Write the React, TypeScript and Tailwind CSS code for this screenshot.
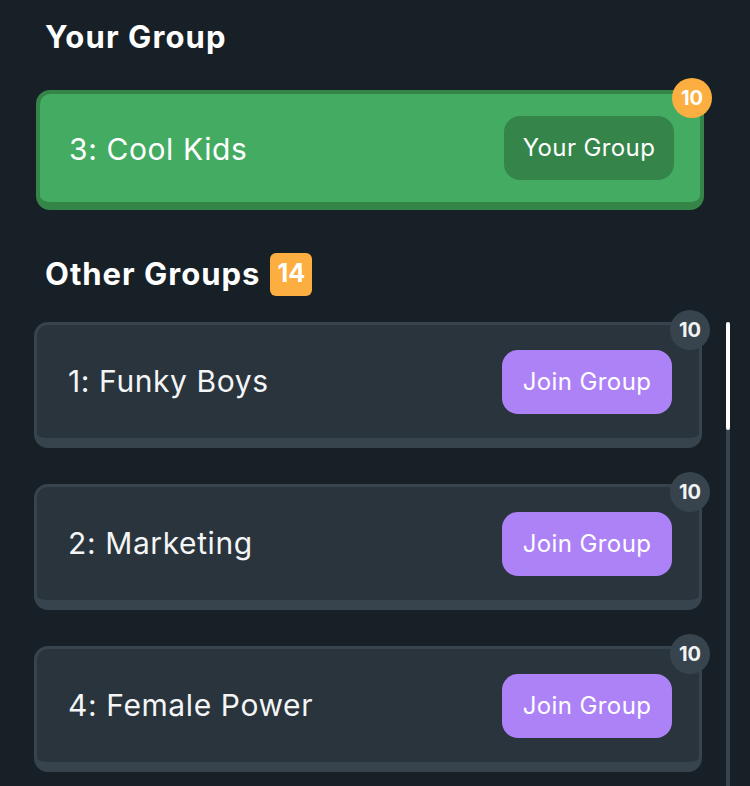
import React from "react";

const font = { fontFamily: "Inter, 'Noto Sans', sans-serif" };

function CountBadge({ n, orange }: { n: number; orange?: boolean }) {
  return (
    <div
      className={
        "absolute flex h-[40px] w-[40px] items-center justify-center rounded-full text-[20px] font-bold " +
        (orange
          ? "-right-[12px] -top-[16px] bg-[#fdae40] text-white"
          : "-right-[11px] -top-[15px] bg-[#37444e] text-[#f1f3f4]")
      }
    >
      {n}
    </div>
  );
}

function GroupCard({ title }: { title: string }) {
  return (
    <div className="relative flex h-[126px] w-[668px] items-center justify-between rounded-[14px] border-[3px] border-b-[10px] border-[#37444e] bg-[#29343d] pl-[31px] pr-[27px]">
      <span className="text-[30px] tracking-[0.6px] text-[#f4f5f6]">{title}</span>
      <button className="flex h-[64px] w-[170px] items-center justify-center rounded-[16px] bg-[#ad82f7] text-[24px] tracking-[0.4px] text-white">
        Join Group
      </button>
      <CountBadge n={10} />
    </div>
  );
}

export default function App() {
  return (
    <div className="flex h-[786px] w-[750px] flex-col overflow-hidden bg-[#172026]" style={font}>
      <h2 className="pl-[45px] pt-[18px] text-[31px] font-bold leading-[38px] tracking-[1.1px] text-white">Your Group</h2>
      <div className="mt-[34px] pl-[36px]">
        <div className="relative flex h-[120px] w-[668px] items-center justify-between rounded-[14px] border-[4px] border-b-[8px] border-[#358549] bg-[#43ac62] pl-[29px] pr-[26px]">
          <span className="mt-[3px] text-[30px] tracking-[0.6px] text-white">3: Cool Kids</span>
          <button className="flex h-[64px] w-[170px] items-center justify-center rounded-[16px] bg-[#35854b] text-[24px] tracking-[0.4px] text-white">
            Your Group
          </button>
          <CountBadge n={10} orange />
        </div>
      </div>
      <div className="mt-[42px] flex items-center gap-[10px] pl-[45px]">
        <h2 className="text-[31px] font-bold leading-[44px] tracking-[1px] text-white">Other Groups</h2>
        <div className="flex h-[43px] w-[42px] items-center justify-center rounded-[6px] bg-[#fdae40] text-[25px] font-bold text-white">
          14
        </div>
      </div>
      <div className="mt-[26px] flex min-h-0 flex-1 pl-[34px]">
        <div className="flex flex-col gap-[36px]">
          <GroupCard title="1: Funky Boys" />
          <GroupCard title="2: Marketing" />
          <GroupCard title="4: Female Power" />
        </div>
        <div className="ml-[24px] flex w-[4px] flex-col bg-[#37444e]">
          <div className="h-[108px] w-[4px] rounded-full bg-white" />
        </div>
      </div>
    </div>
  );
}
